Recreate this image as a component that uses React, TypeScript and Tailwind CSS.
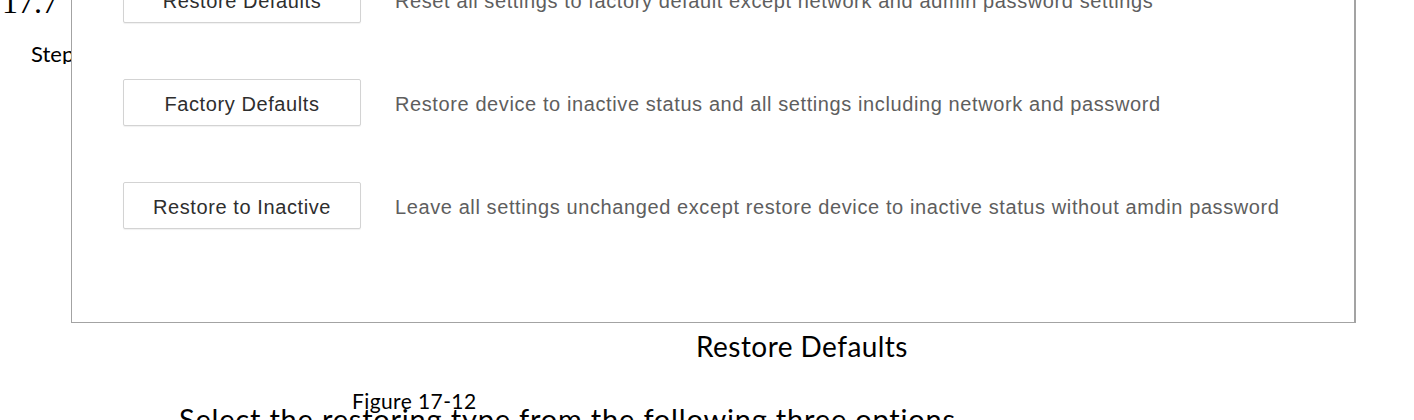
import React from "react";

const rows = [
  {
    label: "Restore Defaults",
    desc: "Reset all settings to factory default except network and admin password settings",
  },
  {
    label: "Factory Defaults",
    desc: "Restore device to inactive status and all settings including network and password",
  },
  {
    label: "Restore to Inactive",
    desc: "Leave all settings unchanged except restore device to inactive status without amdin password",
  },
];

export default function App() {
  return (
    <div className="w-[1414px] h-[420px] overflow-hidden bg-white">
      <div className="flex items-start h-[323px]">
        <div className="w-[71px] shrink-0 overflow-hidden whitespace-nowrap">
          <div className="-mt-[14px] pl-[2px] text-[32px] leading-[32px] text-black font-['Liberation_Serif',serif]">
            17.7<span className="ml-[24px]">Restore Defaults</span>
          </div>
          <div className="mt-[26px] pl-[31px] text-[22px] leading-[20px] text-black font-['Lato',sans-serif]">
            Steps:
          </div>
        </div>
        <div className="w-[1285px] h-[347px] -mt-[24px] shrink-0 bg-white border-l border-b border-r-2 border-[#a3a3a3] pl-[51px] flex flex-col gap-[56px]">
          {rows.map((r) => (
            <div key={r.label} className="flex items-center h-[47px]">
              <div className="w-[238px] h-[47px] shrink-0 flex items-center justify-center pt-[3px] border border-[#d3d3d3] rounded-[2px] bg-white shadow-[0_1px_1px_rgba(0,0,0,0.06)] text-[20px] tracking-[0.6px] text-[#2e2e2e] font-['Liberation_Sans',Arial,sans-serif] whitespace-nowrap">
                {r.label}
              </div>
              <div className="ml-[34px] pt-[3px] text-[20px] tracking-[0.6px] text-[#5e5e5e] font-['Liberation_Sans',Arial,sans-serif] whitespace-nowrap">
                {r.desc}
              </div>
            </div>
          ))}
        </div>
      </div>
      <div className="mt-[9px] pl-[696px] text-[28px] leading-[28px] tracking-[0.45px] text-black font-['Lato',sans-serif] whitespace-nowrap">
        Restore Defaults
      </div>
      <div className="mt-[34px] pl-[352px] text-[21px] leading-[14px] tracking-[0.4px] text-black font-['Lato',sans-serif] whitespace-nowrap">
        Figure 17-12
      </div>
      <div className="mt-[1px] pl-[179px] text-[29px] leading-[20px] tracking-[0.8px] text-black font-['Lato',sans-serif] whitespace-nowrap">
        Select the restoring type from the following three options
      </div>
    </div>
  );
}
